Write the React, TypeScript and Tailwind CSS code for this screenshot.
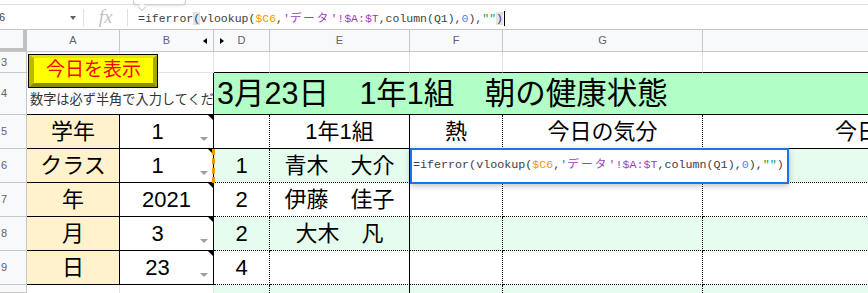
import clsx from 'clsx';
import type {ReactNode} from 'react';

const SANS = 'font-["Liberation_Sans","Noto_Sans_CJK_JP",sans-serif]';

function Cell({w, className, children}: {w: string; className?: string; children?: ReactNode}) {
  return <div className={clsx('relative box-border h-full shrink-0', w, className)}>{children}</div>;
}

function RowNum({n}: {n?: number}) {
  return (
    <Cell w="w-[27px]" className="flex items-center border-r border-b border-[#c7c7c7] bg-[#f8f9fa] pl-px text-[11px] text-[#5f6368]">
      {n}
    </Cell>
  );
}

function NoteMark() {
  return <span className="absolute top-0 right-0 h-0 w-0 border-t-[5px] border-l-[5px] border-t-black border-l-transparent" />;
}

function DropArrow() {
  return <span className="absolute right-[5px] bottom-[7px] h-0 w-0 border-x-[4px] border-t-[4px] border-x-transparent border-t-[#9aa0a6]" />;
}

function Formula({bar}: {bar?: boolean}) {
  return (
    <span
      className={clsx(
        'whitespace-pre font-["Liberation_Mono","Noto_Sans_CJK_JP",monospace] text-[#3c4043]',
        bar ? 'text-[11.5px]' : 'text-[11.7px]',
      )}
    >
      =iferror<span className={bar ? 'bg-[#e3e3e3]' : ''}>(</span>vlookup(
      <span className="text-[#f29900]">$C6</span>,
      <span className="text-[#9c3fb8]">
        '<span className="tracking-[2px]">データ</span>'!$A:$T
      </span>
      ,column(Q1),<span className="text-[#4285f4]">0</span>),<span className="text-[#0f9d58]">""</span>
      <span className={bar ? 'bg-[#e3e3e3]' : ''}>)</span>
      {bar && <span className="ml-px inline-block h-[15px] w-px bg-black align-middle" />}
    </span>
  );
}

export default function App() {
  const gray = 'border-[#e2e3e3]';
  const data = [
    {label: '学年', value: '1', drop: true, no: '', name: '', green: false, header: true},
    {label: 'クラス', value: '1', drop: true, no: '1', name: '青木　大介', green: true},
    {label: '年', value: '2021', drop: false, no: '2', name: '伊藤　佳子', green: false},
    {label: '月', value: '3', drop: true, no: '2', name: '大木　凡', green: true},
    {label: '日', value: '23', drop: true, no: '4', name: '', green: false},
  ];

  return (
    <div className={clsx('relative h-[293px] w-[868px] overflow-hidden bg-white', SANS)}>
      {/* formula bar */}
      <div className="h-[4px]" />
      <div className="flex h-[25px] items-center border-t border-[#e1e1e1]">
        <div className="relative flex h-full w-[83px] items-center text-[11px] text-[#3c4043]">
          <span className="-ml-px">6</span>
          <span className="absolute top-[11px] left-[70px] h-0 w-0 border-x-[3.5px] border-t-[4px] border-x-transparent border-t-[#5f6368]" />
        </div>
        <div className="h-[17px] w-px bg-[#e0e0e0]" />
        <div className='flex w-[43px] justify-center font-["Liberation_Serif",serif] text-[19px] italic text-[#c2c2c2]'>fx</div>
        <div className="h-[17px] w-px bg-[#e0e0e0]" />
        <div className="pl-[10px]">
          <Formula bar />
        </div>
      </div>

      {/* column headers */}
      <div className="flex h-[23px] border-t border-b border-[#c7c7c7] bg-[#f8f9fa] text-[11px] text-[#5f6368]">
        <Cell w="w-[27px]" className="border-r-[4px] border-b-[3px] border-[#c0c0c0]" />
        <Cell w="w-[93px]" className="flex items-center justify-center border-r border-[#c7c7c7]">A</Cell>
        <Cell w="w-[94px]" className="flex items-center justify-center border-r border-[#c7c7c7]">
          B
          <span className="absolute top-[8px] right-[6px] h-0 w-0 border-y-[3.5px] border-r-[4px] border-y-transparent border-r-black" />
        </Cell>
        <Cell w="w-[56px]" className="flex items-center justify-center border-r border-[#c7c7c7]">
          D
          <span className="absolute top-[8px] left-[6px] h-0 w-0 border-y-[3.5px] border-l-[4px] border-y-transparent border-l-black" />
        </Cell>
        <Cell w="w-[140px]" className="flex items-center justify-center border-r border-[#c7c7c7]">E</Cell>
        <Cell w="w-[93px]" className="flex items-center justify-center border-r border-[#c7c7c7]">F</Cell>
        <Cell w="w-[200px]" className="flex items-center justify-center border-r border-[#c7c7c7]">G</Cell>
        <Cell w="w-[374px]" className="border-r border-[#c7c7c7]" />
      </div>

      {/* row 3 */}
      <div className="flex h-[21px]">
        <RowNum n={3} />
        <Cell w="w-[93px]" className={clsx('border-r border-b', gray)} />
        <Cell w="w-[94px]" className={clsx('border-r border-b', gray)} />
        <Cell w="w-[56px]" className={clsx('border-r border-b border-b-black', gray)} />
        <Cell w="w-[140px]" className={clsx('border-r border-b border-b-black', gray)} />
        <Cell w="w-[93px]" className={clsx('border-r border-b border-b-black', gray)} />
        <Cell w="w-[200px]" className={clsx('border-r border-b border-b-black', gray)} />
        <Cell w="w-[374px]" className="border-b border-black" />
      </div>

      {/* row 4 */}
      <div className="flex h-[42px]">
        <RowNum n={4} />
        <Cell w="w-[187px]" className="flex items-end overflow-hidden border-r border-b border-black pb-[4px] pl-[3px] text-[13.2px] whitespace-nowrap text-[#333]">
          数字は必ず半角で入力してください
        </Cell>
        <Cell w="w-[863px]" className="flex items-center border-b border-black bg-[#b2fec7] pl-[3px] text-[30.5px] whitespace-pre text-black">
          3月23日　1年1組　朝の健康状態
        </Cell>
      </div>

      {/* rows 5-9 */}
      {data.map((r, i) => {
        const bg = r.green ? 'bg-[#e5fcef]' : 'bg-white';
        const bottom = r.header ? 'border-b' : 'border-b [border-bottom-style:dotted]';
        return (
          <div key={i} className="flex h-[34px] text-[22px] text-black">
            <RowNum n={i + 5} />
            <Cell w="w-[93px]" className="flex items-center justify-center border-r border-b border-black bg-[#fff2cc]">
              {r.label}
            </Cell>
            <Cell
              w="w-[94px]"
              className={clsx('flex items-center justify-center border-r border-b border-black', r.drop && 'pr-[18px]')}
            >
              {r.value}
              <NoteMark />
              {r.drop && <DropArrow />}
            </Cell>
            <Cell w="w-[56px]" className={clsx('flex items-center justify-center border-r border-black [border-right-style:dotted]', bottom, bg)}>
              {r.no}
            </Cell>
            <Cell w="w-[140px]" className={clsx('flex items-center justify-center border-r border-black whitespace-pre', bottom, bg)}>
              {r.header ? '1年1組' : r.name}
            </Cell>
            <Cell w="w-[93px]" className={clsx('flex items-center justify-center border-r border-black [border-right-style:dotted]', bottom, bg)}>
              {r.header ? '熱' : ''}
            </Cell>
            <Cell w="w-[200px]" className={clsx('flex items-center justify-center border-r border-black [border-right-style:dotted]', bottom, bg)}>
              {r.header ? '今日の気分' : ''}
            </Cell>
            <Cell w="w-[374px]" className={clsx('flex items-center justify-center border-black', bottom, bg)}>
              {r.header ? '今日の体調' : ''}
            </Cell>
          </div>
        );
      })}

      {/* row 10 */}
      <div className="flex h-[8px]">
        <RowNum />
        <Cell w="w-[93px]" className={clsx('border-r', gray)} />
        <Cell w="w-[94px]" className={clsx('border-r', gray)} />
        <Cell w="w-[56px]" className="border-r border-dotted border-black bg-[#e5fcef]" />
        <Cell w="w-[140px]" className="border-r border-black bg-[#e5fcef]" />
        <Cell w="w-[93px]" className="border-r border-dotted border-black bg-[#e5fcef]" />
        <Cell w="w-[200px]" className="border-r border-dotted border-black bg-[#e5fcef]" />
        <Cell w="w-[374px]" className="bg-[#e5fcef]" />
      </div>

      {/* overlays */}
      <div className="absolute top-0 left-[133px] h-[5px] w-[53px] rounded-b-sm border border-t-0 border-[#d0d0d0] bg-white shadow-sm" />
      <div className="absolute top-[4px] left-[139px] h-[6px] w-[6px] rotate-45 border-r border-b border-[#d0d0d0] bg-white" />

      <div className="absolute top-[54px] left-[28px] box-border h-[34px] w-[130px] border border-black">
        <div className="box-border flex h-full w-full items-center justify-center border-t-[3px] border-r-[4px] border-b-[4px] border-l-[5px] border-t-[#e6e600] border-r-[#a8a800] border-b-[#8c8c00] border-l-[#b9b900] bg-[#ffff00] text-[19px] text-[#ff0000]">
          今日を表示
        </div>
      </div>

      <div className="absolute top-[149px] left-[212px] h-[34px] border-l-[3px] border-dashed border-[#f29900]" />

      <div className="absolute top-[148px] left-[410px] box-border flex h-[36px] w-[379px] items-center border-2 border-[#1a73e8] bg-white pl-[1px] shadow-[0_2px_6px_rgba(0,0,0,0.25)]">
        <Formula />
      </div>
    </div>
  );
}
